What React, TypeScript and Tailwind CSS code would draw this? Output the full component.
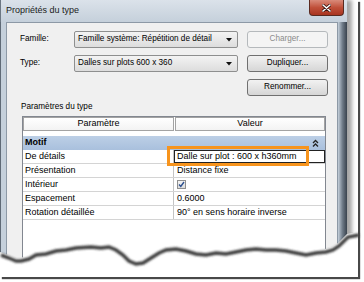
const FONT = { fontFamily: '"Liberation Sans", Arial, sans-serif' }

const ROWS: { name: string; value: string; edit?: boolean; check?: boolean }[] = [
  { name: 'De détails', value: 'Dalle sur plot : 600 x h360mm', edit: true },
  { name: 'Présentation', value: 'Distance fixe' },
  { name: 'Intérieur', value: '', check: true },
  { name: 'Espacement', value: '0.6000' },
  { name: 'Rotation détaillée', value: '90° en sens horaire inverse' },
]

// torn bottom edge of the screenshot
const TEAR =
  '0,252 8,255 15,258 20,258 28,256 35,252 45,251 55,248 65,247 75,245 90,244 100,245 108,244 115,247 122,252 128,258 135,261 142,260 150,255 158,250 165,247 175,246 185,248 195,251 205,252 215,250 225,251 235,249 245,247 255,246 265,247 275,247 285,248 295,250 305,252 315,250 325,249 332,247 338,243 343,238 347,234 358,232'

function Combo({ text }: { text: string }) {
  return (
    <div className="w-[164px] h-[17px] flex items-center justify-between pl-[3px] pr-[5px] rounded-[2px] border border-[#8e8f8f] bg-gradient-to-b from-[#f3f3f3] to-[#dddddd] text-[8.2px] text-black">
      <span>{text}</span>
      <svg width="6" height="4" viewBox="0 0 6 4">
        <path d="M0 0h6L3 3.5z" fill="#111" />
      </svg>
    </div>
  )
}

function Button({ label, disabled }: { label: string; disabled?: boolean }) {
  return (
    <div
      className={
        disabled
          ? 'w-[81px] h-[17px] flex items-center justify-center rounded-[3px] border border-[#b5b9bc] bg-[#f4f4f4] text-[8.2px] text-[#8b8b8b]'
          : 'w-[81px] h-[17px] flex items-center justify-center rounded-[3px] border border-[#707070] bg-gradient-to-b from-[#f2f2f2] to-[#d6d6d6] text-[8.2px] text-black'
      }
    >
      {label}
    </div>
  )
}

export default function App() {
  return (
    <div className="w-[364px] h-[282px] bg-white relative overflow-hidden" style={FONT}>
      <div className="w-[358px] h-[277px] bg-white shadow-[2px_2px_1px_rgba(40,40,40,0.85)]">
        <div className="w-[347px] h-[262px] flex flex-col shadow-[5px_0_4px_rgba(0,0,0,0.35)]">
          {/* title bar */}
          <div className="h-[22px] flex justify-between bg-gradient-to-b from-[#dbe2ea] to-[#c5d0db] border-l border-[#6c7783]">
            <span className="pl-[5px] pt-[4px] text-[9px] text-[#1b1b1b]">Propriétés du type</span>
            <div className="w-[35px] h-[16px] mr-[3px] mt-[0px] flex items-center justify-center rounded-b-[4px] border border-t-0 border-[#5a2a20] bg-gradient-to-b from-[#d98a7a] via-[#c0503a] to-[#a83420]">
              <svg width="9" height="8" viewBox="0 0 9 8">
                <path d="M1 1l7 6M8 1L1 7" stroke="#3a1510" strokeWidth="3" strokeLinecap="round" />
                <path d="M1 1l7 6M8 1L1 7" stroke="#fff" strokeWidth="1.6" strokeLinecap="round" />
              </svg>
            </div>
          </div>
          <div className="flex-1 flex">
            <div className="w-[6px] bg-[#c5d0db] border-l border-[#5f6a76]" />
            <div className="flex-1 bg-[#f0f0f0] border border-b-0 border-[#8d99a6] flex flex-col">
              {/* top fields */}
              <div className="pt-[8px] pl-[13px] flex flex-col gap-[7px]">
                <div className="flex items-center">
                  <span className="w-[54px] text-[8.2px] text-black">Famille:</span>
                  <Combo text="Famille système: Répétition de détail" />
                  <div className="ml-[9px]">
                    <Button label="Charger..." disabled />
                  </div>
                </div>
                <div className="flex items-center">
                  <span className="w-[54px] text-[8.2px] text-black">Type:</span>
                  <Combo text="Dalles sur plots 600 x 360" />
                  <div className="ml-[9px]">
                    <Button label="Dupliquer..." />
                  </div>
                </div>
                <div className="flex items-center pl-[227px]">
                  <Button label="Renommer..." />
                </div>
              </div>
              <div className="mt-[5px] pl-[14px] text-[8.2px] leading-[11px] text-black">Paramètres du type</div>
              {/* parameters table */}
              <div className="mt-[4px] ml-[15px] w-[304px] flex-1 bg-white border border-b-0 border-[#828790] text-[9px] text-black">
                <div className="flex gap-[1px] h-[14px]">
                  <div className="w-[151px] flex items-center justify-center border border-[#a3a3a3] bg-gradient-to-b from-white to-[#f3f3f3]">Paramètre</div>
                  <div className="flex-1 flex items-center justify-center border border-[#a3a3a3] bg-gradient-to-b from-white to-[#f3f3f3]">Valeur</div>
                </div>
                <div className="h-[5px]" />
                <div className="h-[14px] flex items-center justify-between pl-[2px] pr-[6px] bg-gradient-to-b from-[#bccfe6] to-[#a9c0dd] font-bold">
                  <span>Motif</span>
                  <svg width="7" height="8" viewBox="0 0 7 8">
                    <path d="M1 4l2.5-2.5L6 4M1 7.5l2.5-2.5L6 7.5" stroke="#222" strokeWidth="1.3" fill="none" />
                  </svg>
                </div>
                {ROWS.map((r) => (
                  <div key={r.name} className="h-[14px] flex border-b border-[#d4d4d4]">
                    <div className="w-[151px] pl-[2px] flex items-center border-r border-[#c4c4c4]">{r.name}</div>
                    <div
                      className={
                        r.edit
                          ? 'flex-1 pl-[2px] flex items-center border border-[#222]'
                          : 'flex-1 pl-[3px] flex items-center'
                      }
                    >
                      {r.check ? (
                        <div className="w-[9px] h-[9px] border border-[#8f8f8f] bg-gradient-to-b from-[#f4f4f4] to-[#dcdcdc] flex items-center justify-center">
                          <svg width="7" height="7" viewBox="0 0 7 7">
                            <path d="M1 3.5l1.8 2L6 1" stroke="#2b4f8f" strokeWidth="1.4" fill="none" />
                          </svg>
                        </div>
                      ) : (
                        r.value
                      )}
                    </div>
                  </div>
                ))}
              </div>
            </div>
            <div className="w-[9px] bg-gradient-to-r from-[#c5d0db] via-[#6f7b88] to-[#3a434e]" />
          </div>
        </div>
      </div>

      {/* orange highlight drawn over the value cell */}
      <div className="absolute left-[167px] top-[146px] w-[142px] h-[20px] border-[3px] border-[#f7941d]" />

      {/* torn paper edge */}
      <svg className="absolute left-0 top-0 pointer-events-none" width="364" height="282">
        <defs>
          <filter id="blur" x="-5%" y="-50%" width="110%" height="200%">
            <feGaussianBlur stdDeviation="1.2" />
          </filter>
        </defs>
        <polygon points={`${TEAR} 358,276 0,276`} fill="#fff" />
        <polyline points={TEAR} transform="translate(1 3)" fill="none" stroke="#3a3a3a" strokeWidth="3.5" filter="url(#blur)" />
      </svg>
    </div>
  )
}
